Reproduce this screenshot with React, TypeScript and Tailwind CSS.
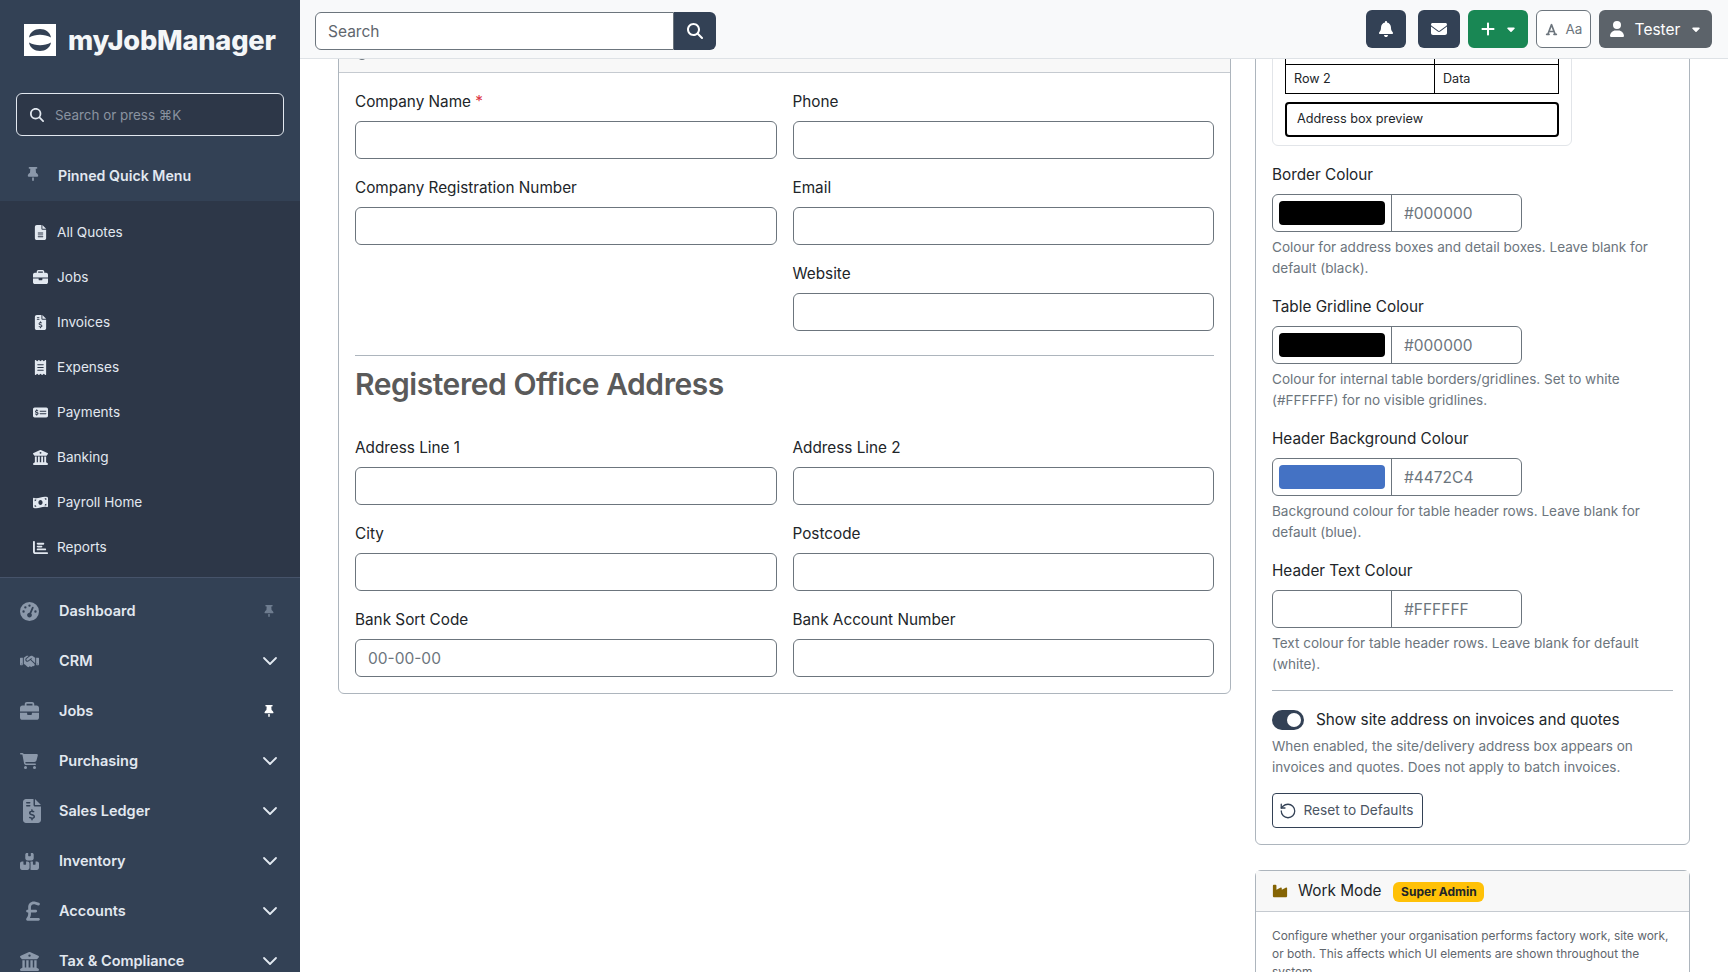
import type { ReactNode } from 'react'
import { ChevronDown, RotateCcw } from 'lucide-react'
import {
  FaBell, FaBoxesStacked, FaBriefcase, FaBuildingColumns, FaCaretDown, FaChartBar, FaEnvelope, FaFileInvoiceDollar,
  FaFileLines, FaFont, FaGaugeHigh, FaHandshake, FaIndustry, FaMagnifyingGlass, FaMoneyBillWave, FaMoneyCheckDollar,
  FaPlus, FaReceipt, FaCartShopping, FaSterlingSign, FaThumbtack, FaUser,
} from 'react-icons/fa6'

const quickLinks = [
  { label: 'All Quotes', icon: <FaFileLines className="text-[15px]" /> },
  { label: 'Jobs', icon: <FaBriefcase className="text-[15px]" /> },
  { label: 'Invoices', icon: <FaFileInvoiceDollar className="text-[15px]" /> },
  { label: 'Expenses', icon: <FaReceipt className="text-[15px]" /> },
  { label: 'Payments', icon: <FaMoneyCheckDollar className="text-[15px]" /> },
  { label: 'Banking', icon: <FaBuildingColumns className="text-[15px]" /> },
  { label: 'Payroll Home', icon: <FaMoneyBillWave className="text-[15px]" /> },
  { label: 'Reports', icon: <FaChartBar className="text-[15px]" /> },
]

const mainLinks = [
  { label: 'Dashboard', icon: <FaGaugeHigh className="text-[19px]" />, pin: 'dim' },
  { label: 'CRM', icon: <FaHandshake className="text-[19px]" /> },
  { label: 'Jobs', icon: <FaBriefcase className="text-[19px]" />, pin: 'on' },
  { label: 'Purchasing', icon: <FaCartShopping className="text-[18px]" /> },
  { label: 'Sales Ledger', icon: <FaFileInvoiceDollar className="text-[24px]" /> },
  { label: 'Inventory', icon: <FaBoxesStacked className="text-[19px]" /> },
  { label: 'Accounts', icon: <FaSterlingSign className="text-[22px] ml-[2px]" /> },
  { label: 'Tax & Compliance', icon: <FaBuildingColumns className="text-[19px]" /> },
]

function Logo() {
  return (
    <svg width="32" height="32" viewBox="0 0 32 32" className="shrink-0">
      <rect width="32" height="32" fill="#ffffff" />
      <path d="M5 13.500C6 8 10.500 5 16 5s10 3 11 8.500c-3.500-1.800-7-2.700-11-2.700s-7.500.9-11 2.700z" fill="#334155" />
      <path d="M5 18.500C6 24 10.500 27 16 27s10-3 11-8.500c-3.500 1.800-7 2.700-11 2.700s-7.500-.9-11-2.700z" fill="#334155" />
    </svg>
  )
}

function Sidebar() {
  return (
    <aside className="w-[300px] shrink-0 h-full overflow-hidden bg-[#334155] flex flex-col">
      <div className="h-[93px] shrink-0 pl-6 pt-6 flex items-start gap-3">
        <Logo />
        <span className="pt-px text-[27.2px] leading-[32px] font-extrabold text-[#f4f6f8] tracking-[-0.2px]">myJobManager</span>
      </div>
      <div className="mx-4 h-[43px] shrink-0 rounded-md border border-[#e2e8f0] bg-[#2d3748] flex items-center pl-[13px] gap-[11px] text-[13.4px] text-[#8a93a0]">
        <FaMagnifyingGlass className="text-[#e2e8f0] text-sm" />
        <span className="pt-px">Search or press ⌘K</span>
      </div>
      <div className="h-[65px] shrink-0 flex items-center pl-[26px] pt-[15px] gap-[18px]">
        <FaThumbtack className="text-[#8b98aa] text-[14px] -mt-1" />
        <span className="text-[14.2px] font-semibold text-[#e2e8f0]">Pinned Quick Menu</span>
      </div>
      <div className="h-[377px] shrink-0 bg-[#2d3748] border-b border-[#46536a] pt-[9px]">
        {quickLinks.map((l) => (
          <div key={l.label} className="h-[45px] flex items-center text-[13.6px] text-[#e2e8f0]">
            <span className="w-[57px] shrink-0 pl-[33px]">
              <span className="w-[15px] flex justify-center">{l.icon}</span>
            </span>
            <span>{l.label}</span>
          </div>
        ))}
      </div>
      <div className="pt-2">
        {mainLinks.map((l) => (
          <div key={l.label} className="h-[50px] flex items-center pl-5 pr-[23px] text-[14.5px] font-semibold text-[#e2e8f0]">
            <span className="w-[39px] shrink-0 text-[#8b98aa]">{l.icon}</span>
            <span className="flex-1">{l.label}</span>
            {l.pin === 'dim' && <FaThumbtack className="text-[#6f7d90] text-[12px] mr-[2px]" />}
            {l.pin === 'on' && <FaThumbtack className="text-white text-[12px] mr-[2px]" />}
            {!l.pin && <ChevronDown size={24} strokeWidth={1.8} className="text-[#e2e8f0] -mr-[5px]" />}
          </div>
        ))}
      </div>
    </aside>
  )
}

function TopBar() {
  return (
    <header className="h-[59px] shrink-0 bg-[#f8f9fa] border-b border-[#dee2e6] flex items-center pl-[15px] pr-4 relative z-10">
      <div className="flex w-[401px] h-[38px] mt-1">
        <div className="flex-1 bg-white border border-[#6c757d] rounded-l-md flex items-center px-3 pt-px text-[15.5px] text-[#5f666d]">Search</div>
        <div className="w-[42px] bg-[#334155] rounded-r-md flex items-center justify-center text-white"><FaMagnifyingGlass /></div>
      </div>
      <div className="ml-auto flex items-center">
        <div className="w-10 h-[38px] rounded-md bg-[#334155] text-white flex items-center justify-center"><FaBell /></div>
        <div className="w-[42px] h-[38px] ml-3 rounded-md bg-[#334155] text-white flex items-center justify-center"><FaEnvelope /></div>
        <div className="w-[60px] h-[38px] ml-2 rounded-md bg-[#198754] text-white flex items-center justify-center gap-[9px]">
          <FaPlus /><FaCaretDown className="text-xs" />
        </div>
        <div className="w-[55px] h-[38px] ml-2 rounded-md bg-white border border-[#6c757d] text-[#6c757d] flex items-center justify-center gap-[8px]">
          <FaFont className="text-[13px]" /><span className="text-[13.5px]">Aa</span>
        </div>
        <div className="w-[113px] h-[38px] ml-2 rounded-md bg-[#5c636a] text-white flex items-center justify-center gap-[10px]">
          <FaUser className="text-base" /><span className="pt-px text-[15.5px]">Tester</span><FaCaretDown className="text-xs" />
        </div>
      </div>
    </header>
  )
}

function Field({ label, placeholder, required }: { label: string; placeholder?: string; required?: boolean }) {
  return (
    <div className="h-[86px]">
      <div className="h-[32px] pt-px leading-[24px] text-[15.3px] text-[#212529]">
        {label}{required && <span className="text-[#dc3545]"> *</span>}
      </div>
      <div className="h-[38px] bg-white border border-[#6c757d] rounded-md flex items-center px-3 pt-px text-[15.5px] text-[#6c757d]">{placeholder}</div>
    </div>
  )
}

function CompanyCard() {
  return (
    <section className="w-[893px] shrink-0 -mt-5 border border-[#adb5bd] rounded-md bg-white">
      <div className="h-[33px] bg-[#f8f8f8] border-b border-[#c5cad0] overflow-hidden pl-[18px]">
        <div className="w-[10px] h-[10px] rounded-full border-2 border-[#6c757d] mt-[10px]" />
      </div>
      <div className="px-4 pt-[16px]">
        <div className="grid grid-cols-2 gap-x-4">
          <div>
            <Field label="Company Name" required />
            <Field label="Company Registration Number" />
          </div>
          <div>
            <Field label="Phone" />
            <Field label="Email" />
            <Field label="Website" />
          </div>
        </div>
        <hr className="border-[#adb5bd] mt-[8px]" />
        <h2 className="text-[30px] leading-[38px] tracking-[-0.45px] font-semibold text-[#5a5a5a] mt-[9px] mb-[32px]">Registered Office Address</h2>
        <div className="grid grid-cols-2 gap-x-4">
          <Field label="Address Line 1" />
          <Field label="Address Line 2" />
          <Field label="City" />
          <Field label="Postcode" />
          <Field label="Bank Sort Code" placeholder="00-00-00" />
          <Field label="Bank Account Number" />
        </div>
      </div>
    </section>
  )
}

function ColourField({ label, value, swatch, help }: { label: string; value: string; swatch: string; help: ReactNode }) {
  return (
    <div className="h-[132px]">
      <div className="h-[32px] pt-px leading-[24px] text-[15.3px] text-[#212529]">{label}</div>
      <div className="flex w-[250px] h-[38px] border border-[#6c757d] rounded-md bg-white">
        <div className="w-[119px] shrink-0 border-r border-[#6c757d] px-[6px] py-[6px]">
          <div className={`h-full rounded-[4px] ${swatch}`} />
        </div>
        <div className="px-3 pt-px flex items-center text-[15.5px] text-[#6c757d]">{value}</div>
      </div>
      <p className="mt-[5px] text-[13.56px] leading-[21px] text-[#6c757d]">{help}</p>
    </div>
  )
}

function AppearanceCard() {
  return (
    <section className="-mt-5 border border-[#adb5bd] rounded-md bg-white px-4 pb-4">
      <div className="w-[300px] h-[106px] border border-[#e2e5e9] rounded-md px-[12px]">
        <div className="border border-black border-t-0 h-[53px] flex flex-col text-[12.6px] text-[#212529]">
          <div className="h-[24px] border-b border-black pl-[148px]"><div className="h-full border-l border-black" /></div>
          <div className="flex-1 flex items-center">
            <span className="w-[149px] pl-2 h-full flex items-center border-r border-black">Row 2</span>
            <span className="pl-2">Data</span>
          </div>
        </div>
        <div className="mt-[8px] h-[35px] border-2 border-black rounded-[4px] flex items-center pl-[10px] pb-px text-[12.7px] text-[#212529]">Address box preview</div>
      </div>
      <div className="mt-[16px]">
        <ColourField label="Border Colour" value="#000000" swatch="bg-black" help="Colour for address boxes and detail boxes. Leave blank for default (black)." />
        <ColourField label="Table Gridline Colour" value="#000000" swatch="bg-black" help="Colour for internal table borders/gridlines. Set to white (#FFFFFF) for no visible gridlines." />
        <ColourField label="Header Background Colour" value="#4472C4" swatch="bg-[#4472c4]" help="Background colour for table header rows. Leave blank for default (blue)." />
        <ColourField label="Header Text Colour" value="#FFFFFF" swatch="bg-white" help="Text colour for table header rows. Leave blank for default (white)." />
      </div>
      <hr className="border-[#adb5bd]" />
      <div className="mt-[17px] flex items-center gap-3 h-[24px]">
        <div className="w-8 h-5 rounded-full bg-[#334155] flex items-center justify-end pr-[3px]">
          <div className="w-[14px] h-[14px] rounded-full bg-white" />
        </div>
        <span className="text-[15.3px] text-[#212529]">Show site address on invoices and quotes</span>
      </div>
      <p className="mt-[4px] text-[13.56px] leading-[21px] text-[#6c757d]">When enabled, the site/delivery address box appears on invoices and quotes. Does not apply to batch invoices.</p>
      <div className="mt-[15px] w-[151px] h-[35px] border border-[#334155] rounded-[4px] flex items-center justify-center gap-[6px] pr-[2px] text-[13.7px] text-[#4b5563]">
        <RotateCcw size={18} strokeWidth={1.7} className="text-[#334155]" />
        <span>Reset to Defaults</span>
      </div>
    </section>
  )
}

function WorkModeCard() {
  return (
    <section className="mt-[25px] border border-[#adb5bd] rounded-md bg-white">
      <div className="h-[41px] bg-[#f8f8f8] border-b border-[#c5cad0] flex items-center px-4">
        <FaIndustry className="text-[#856404] text-[16px] mr-[10px]" />
        <span className="text-[15.3px] text-[#212529]">Work Mode</span>
        <span className="ml-3 mt-[2px] h-5 w-[91px] rounded-md bg-[#ffc107] text-[#212529] text-xs font-bold flex items-center justify-center">Super Admin</span>
      </div>
      <p className="pl-4 pr-3 pt-[15px] text-[11.9px] leading-[18px] text-[#5f666d]">
        Configure whether your organisation performs factory work, site work, or both. This affects which UI elements are shown throughout the system.
      </p>
    </section>
  )
}

export default function App() {
  return (
    <div className="w-[1728px] h-[972px] overflow-hidden flex bg-white text-base font-['Inter',sans-serif]">
      <Sidebar />
      <main className="flex-1 min-w-0 h-full flex flex-col overflow-hidden">
        <TopBar />
        <div className="flex-1 overflow-hidden flex items-start pl-[38px]">
          <CompanyCard />
          <div className="w-[435px] ml-[24px] shrink-0">
            <AppearanceCard />
            <WorkModeCard />
          </div>
        </div>
      </main>
    </div>
  )
}
